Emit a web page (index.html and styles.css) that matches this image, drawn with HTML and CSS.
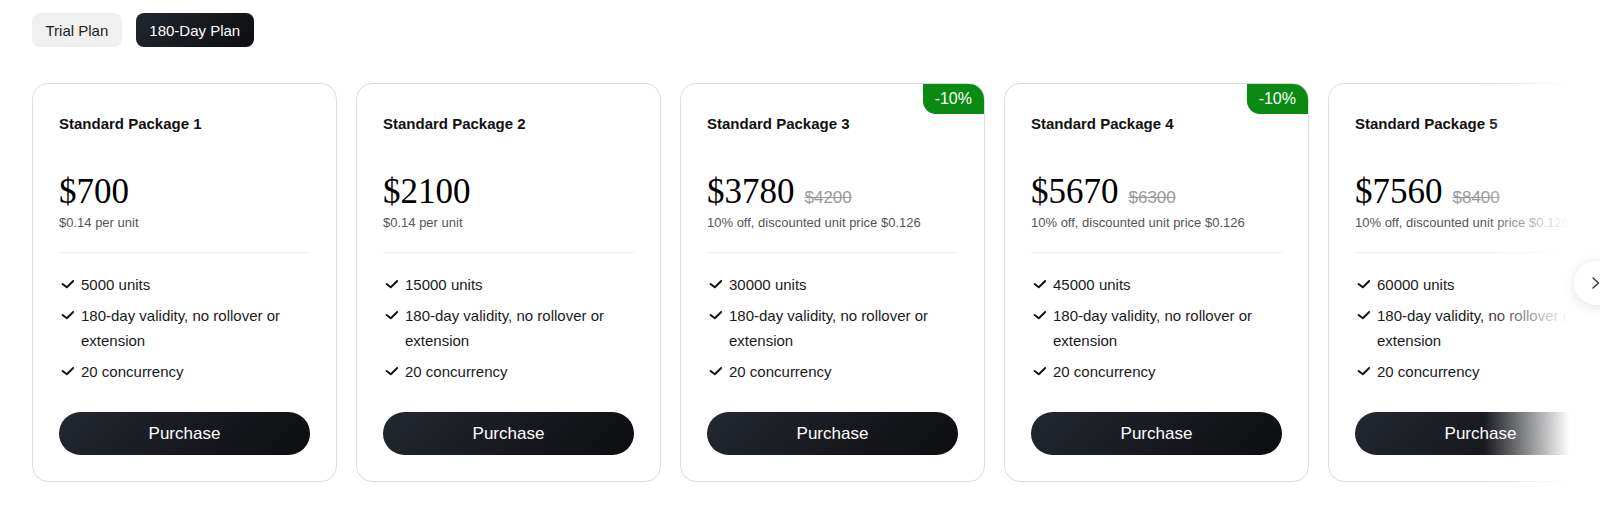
FILE: index.html
```html
<!DOCTYPE html>
<html lang="en">
<head>
<meta charset="utf-8">
<title>Plans</title>
<link rel="stylesheet" href="styles.css">
</head>
<body>
<div class="page">
  <div class="tabs">
    <button class="tab">Trial Plan</button>
    <button class="tab tab-active">180-Day Plan</button>
  </div>

  <div class="carousel">
    <div class="track">
      <div class="card">
        <div class="card-title">Standard Package 1</div>
        <div class="price">$700</div>
        <div class="unit">$0.14 per unit</div>
        <ul class="features">
          <li><svg class="check" viewBox="0 0 15 14"><path d="M3.6 7 L7.8 10.2 L14.2 4"/></svg><span>5000 units</span></li>
          <li><svg class="check" viewBox="0 0 15 14"><path d="M3.6 7 L7.8 10.2 L14.2 4"/></svg><span>180-day validity, no rollover or extension</span></li>
          <li><svg class="check" viewBox="0 0 15 14"><path d="M3.6 7 L7.8 10.2 L14.2 4"/></svg><span>20 concurrency</span></li>
        </ul>
        <button class="buy">Purchase</button>
      </div>

      <div class="card">
        <div class="card-title">Standard Package 2</div>
        <div class="price">$2100</div>
        <div class="unit">$0.14 per unit</div>
        <ul class="features">
          <li><svg class="check" viewBox="0 0 15 14"><path d="M3.6 7 L7.8 10.2 L14.2 4"/></svg><span>15000 units</span></li>
          <li><svg class="check" viewBox="0 0 15 14"><path d="M3.6 7 L7.8 10.2 L14.2 4"/></svg><span>180-day validity, no rollover or extension</span></li>
          <li><svg class="check" viewBox="0 0 15 14"><path d="M3.6 7 L7.8 10.2 L14.2 4"/></svg><span>20 concurrency</span></li>
        </ul>
        <button class="buy">Purchase</button>
      </div>

      <div class="card">
        <div class="badge">-10%</div>
        <div class="card-title">Standard Package 3</div>
        <div class="price">$3780<span class="old">$4200</span></div>
        <div class="unit">10% off, discounted unit price $0.126</div>
        <ul class="features">
          <li><svg class="check" viewBox="0 0 15 14"><path d="M3.6 7 L7.8 10.2 L14.2 4"/></svg><span>30000 units</span></li>
          <li><svg class="check" viewBox="0 0 15 14"><path d="M3.6 7 L7.8 10.2 L14.2 4"/></svg><span>180-day validity, no rollover or extension</span></li>
          <li><svg class="check" viewBox="0 0 15 14"><path d="M3.6 7 L7.8 10.2 L14.2 4"/></svg><span>20 concurrency</span></li>
        </ul>
        <button class="buy">Purchase</button>
      </div>

      <div class="card">
        <div class="badge">-10%</div>
        <div class="card-title">Standard Package 4</div>
        <div class="price">$5670<span class="old">$6300</span></div>
        <div class="unit">10% off, discounted unit price $0.126</div>
        <ul class="features">
          <li><svg class="check" viewBox="0 0 15 14"><path d="M3.6 7 L7.8 10.2 L14.2 4"/></svg><span>45000 units</span></li>
          <li><svg class="check" viewBox="0 0 15 14"><path d="M3.6 7 L7.8 10.2 L14.2 4"/></svg><span>180-day validity, no rollover or extension</span></li>
          <li><svg class="check" viewBox="0 0 15 14"><path d="M3.6 7 L7.8 10.2 L14.2 4"/></svg><span>20 concurrency</span></li>
        </ul>
        <button class="buy">Purchase</button>
      </div>

      <div class="card">
        <div class="badge">-10%</div>
        <div class="card-title">Standard Package 5</div>
        <div class="price">$7560<span class="old">$8400</span></div>
        <div class="unit">10% off, discounted unit price $0.126</div>
        <ul class="features">
          <li><svg class="check" viewBox="0 0 15 14"><path d="M3.6 7 L7.8 10.2 L14.2 4"/></svg><span>60000 units</span></li>
          <li><svg class="check" viewBox="0 0 15 14"><path d="M3.6 7 L7.8 10.2 L14.2 4"/></svg><span>180-day validity, no rollover or extension</span></li>
          <li><svg class="check" viewBox="0 0 15 14"><path d="M3.6 7 L7.8 10.2 L14.2 4"/></svg><span>20 concurrency</span></li>
        </ul>
        <button class="buy">Purchase</button>
      </div>
    </div>
    <div class="fade"></div>
    <button class="next" aria-label="Next"><svg viewBox="0 0 14 14"><path d="M4 2 L9.5 7 L4 12"/></svg></button>
  </div>
</div>
</body>
</html>
```

FILE: styles.css
```css
html, body {
  margin: 0;
  padding: 0;
  background: #ffffff;
  overflow: hidden;
}

body {
  font-family: "Liberation Sans", Arial, sans-serif;
  color: #111111;
}

.page {
  padding: 13px 26px 0 32px;
}

.tabs {
  display: flex;
  gap: 14px;
}

.tab {
  height: 34px;
  padding: 0 13.5px;
  border: none;
  border-radius: 8px;
  background: #f0f0f0;
  color: #222222;
  font-family: "Liberation Sans", Arial, sans-serif;
  font-size: 15px;
  cursor: pointer;
}

.tab-active {
  background: linear-gradient(135deg, #22262d, #0d0e11);
  color: #ffffff;
}

.carousel {
  position: relative;
  margin-top: 36px;
}

.track {
  display: flex;
  gap: 19px;
  overflow: hidden;
}

.card {
  flex: 0 0 305px;
  box-sizing: border-box;
  position: relative;
  overflow: hidden;
  border: 1px solid #dcdcdc;
  border-radius: 16px;
  padding: 26px 26px 26px;
  display: flex;
  flex-direction: column;
}

.badge {
  position: absolute;
  top: 0;
  right: 0;
  height: 30px;
  line-height: 30px;
  padding: 0 12px;
  background: #0b8a13;
  color: #ffffff;
  font-size: 16px;
  border-bottom-left-radius: 13px;
}

.card-title {
  font-size: 15px;
  font-weight: bold;
  line-height: 27px;
  color: #111111;
}

.price {
  margin-top: 35px;
  font-family: "Liberation Serif", "Times New Roman", serif;
  font-size: 35px;
  line-height: 40px;
  color: #000000;
  white-space: nowrap;
}

.old {
  margin-left: 10px;
  font-family: "Liberation Sans", Arial, sans-serif;
  font-size: 17px;
  line-height: 1;
  color: #999999;
  text-decoration: line-through;
}

.unit {
  margin-top: 1.5px;
  font-size: 13px;
  line-height: 18px;
  color: #555555;
  white-space: nowrap;
  padding-bottom: 20.5px;
  border-bottom: 1px solid #efefef;
}

.features {
  list-style: none;
  margin: 19px 0 0;
  padding: 0;
  display: flex;
  flex-direction: column;
  gap: 6px;
}

.features li {
  display: flex;
  align-items: flex-start;
  gap: 7px;
  font-size: 15px;
  line-height: 25px;
  color: #1a1a1a;
}

.check {
  flex: 0 0 15px;
  width: 15px;
  height: 14px;
  margin-top: 5px;
  fill: none;
  stroke: #111111;
  stroke-width: 2;
  stroke-linecap: round;
  stroke-linejoin: round;
}

.buy {
  margin-top: 28px;
  height: 43px;
  border: none;
  border-radius: 22px;
  background: linear-gradient(135deg, #23272f, #0c0d10);
  color: #ffffff;
  font-family: "Liberation Sans", Arial, sans-serif;
  font-size: 17px;
  cursor: pointer;
}

.fade {
  position: absolute;
  top: 0;
  bottom: 0;
  right: 0;
  width: 90px;
  background: linear-gradient(to right, rgba(255, 255, 255, 0), #ffffff 95%);
  pointer-events: none;
}

.next {
  position: absolute;
  top: 50%;
  left: 100%;
  transform: translateY(-50%);
  width: 44px;
  height: 44px;
  padding: 0;
  border: none;
  border-radius: 50%;
  background: #ffffff;
  box-shadow: 0 2px 12px rgba(0, 0, 0, 0.12);
  display: flex;
  align-items: center;
  justify-content: center;
  cursor: pointer;
}

.next svg {
  width: 14px;
  height: 14px;
  fill: none;
  stroke: #333333;
  stroke-width: 1.4;
  stroke-linecap: round;
  stroke-linejoin: round;
}
```
